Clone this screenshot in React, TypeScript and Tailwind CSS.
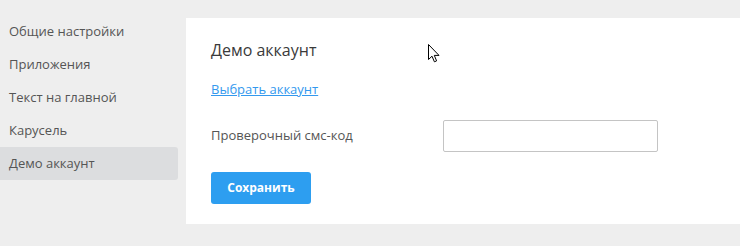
import React from 'react';

const menu = ['Общие настройки', 'Приложения', 'Текст на главной', 'Карусель', 'Демо аккаунт'];

export default function App() {
    const active = 'Демо аккаунт';

    return (
        <div
            className="relative flex h-[246px] w-[740px] overflow-hidden bg-[#eeeeee]"
            style={{ fontFamily: '"Open Sans", "Noto Sans", sans-serif' }}
        >
            {/* sidebar */}
            <nav className="mt-[15px] flex w-[178px] shrink-0 flex-col">
                {menu.map((item) => (
                    <div
                        key={item}
                        className={`flex h-[33px] items-center rounded-r-[3px] pl-[9px] text-[13px] text-[#555555] ${
                            item === active ? 'bg-[#dcdddf]' : ''
                        }`}
                    >
                        {item}
                    </div>
                ))}
            </nav>

            {/* content */}
            <main className="ml-[8px] mt-[18px] h-[206px] flex-1 bg-white pl-[25px] pt-[21px]">
                <h1 className="text-[16px] leading-[22px] text-[#3a3a3a]">Демо аккаунт</h1>
                <a href="#" className="mt-[19px] inline-block text-[13px] leading-[18px] text-[#3399ee] underline">
                    Выбрать аккаунт
                </a>
                <div className="mt-[20px] flex items-center">
                    <label className="w-[232px] text-[13px] text-[#555555]">Проверочный смс-код</label>
                    <input
                        type="text"
                        className="h-[32px] w-[215px] rounded-[2px] border border-[#c4c4c4] bg-white outline-none"
                    />
                </div>
                <button className="mt-[20px] h-[32px] w-[100px] rounded-[3px] bg-[#2d9ef0] text-[12px] font-bold text-white">
                    Сохранить
                </button>
            </main>

            {/* mouse cursor */}
            <svg className="absolute left-[428px] top-[44px]" width="13" height="20" viewBox="0 0 13 20">
                <path
                    d="M0.5 0.5 L0.5 15.5 L4 12.2 L6.4 17.8 L8.6 16.9 L6.3 11.4 L11 11.4 Z"
                    fill="white"
                    stroke="black"
                    strokeWidth="1"
                    strokeLinejoin="miter"
                />
            </svg>
        </div>
    );
}
